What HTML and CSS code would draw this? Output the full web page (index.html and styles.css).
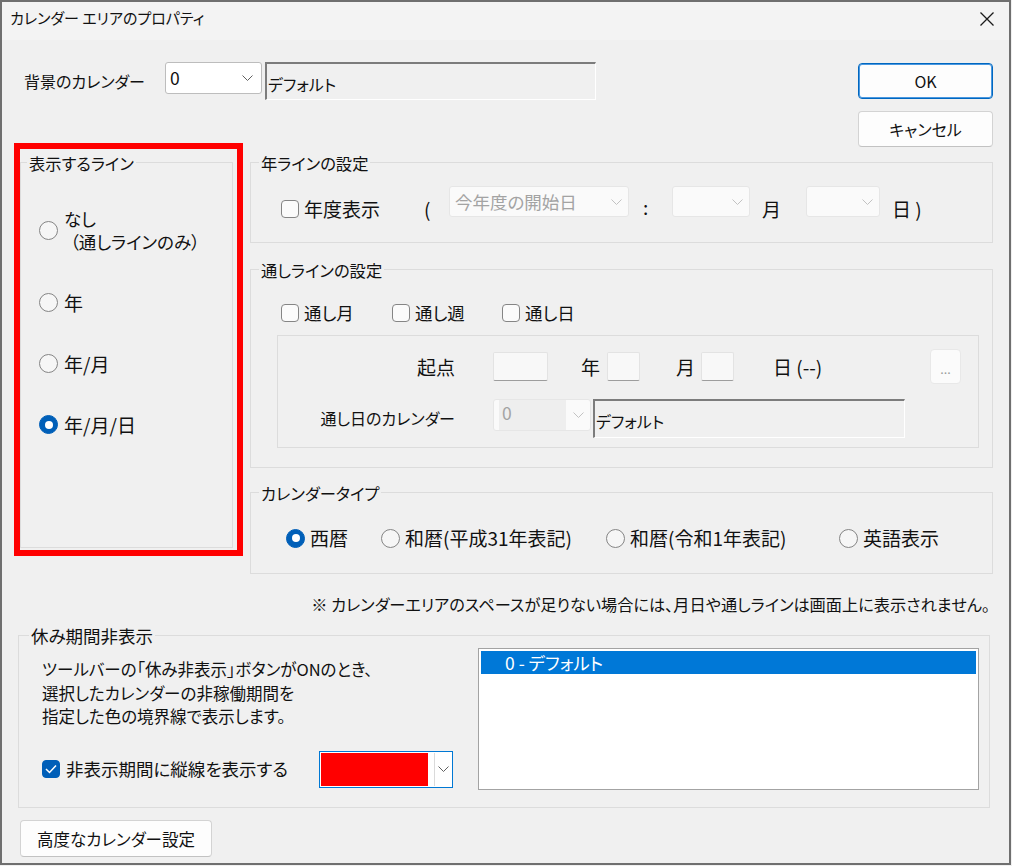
FILE: index.html
```html
<!DOCTYPE html>
<html lang="ja">
<head>
  <meta charset="UTF-8">
  <title>カレンダー エリアのプロパティ</title>
  <link rel="stylesheet" href="styles.css">
</head>
<body>
  <div class="window">
    <div class="titlebar">
      <span class="title">カレンダー エリアのプロパティ</span>
      <svg class="close" width="14" height="14" viewBox="0 0 14 14"><path d="M0.5 0.5 L13.5 13.5 M13.5 0.5 L0.5 13.5" stroke="#1a1a1a" stroke-width="1.3" fill="none"/></svg>
    </div>

    <div class="content">
      <div class="top-row">
        <span class="bg-label">背景のカレンダー</span>
        <div class="combo combo-bg">
          <span>0</span>
          <svg class="chev" width="11" height="6" viewBox="0 0 11 6"><path d="M0.5 0.5 L5.5 5.5 L10.5 0.5" stroke="#606060" fill="none"/></svg>
        </div>
        <div class="sunken field-bg">デフォルト</div>
        <div class="dlg-buttons">
          <button class="btn btn-default">OK</button>
          <button class="btn">キャンセル</button>
        </div>
      </div>

      <div class="middle">
        <!-- annotation box -->
        <div class="highlight">
          <div class="group group-lines">
            <span class="group-title">表示するライン</span>
            <div class="opt">
              <span class="radio"></span>
              <span class="opt-none">なし<br><span class="sub">（通しラインのみ）</span></span>
            </div>
            <div class="opt"><span class="radio"></span><span>年</span></div>
            <div class="opt"><span class="radio"></span><span>年/月</span></div>
            <div class="opt"><span class="radio on"></span><span>年/月/日</span></div>
          </div>
        </div>

        <div class="right-col">
          <div class="group group-year">
            <span class="group-title">年ラインの設定</span>
            <div class="year-row">
              <label class="chk year-chk"><span class="box"></span>年度表示</label>
              <span class="paren">(</span>
              <div class="combo dis combo-start">
                <span>今年度の開始日</span>
                <svg class="chev" width="11" height="6" viewBox="0 0 11 6"><path d="M0.5 0.5 L5.5 5.5 L10.5 0.5" stroke="#c2c2c2" fill="none"/></svg>
              </div>
              <span class="colon">:</span>
              <div class="combo dis combo-month">
                <svg class="chev" width="11" height="6" viewBox="0 0 11 6"><path d="M0.5 0.5 L5.5 5.5 L10.5 0.5" stroke="#c2c2c2" fill="none"/></svg>
              </div>
              <span class="unit">月</span>
              <div class="combo dis combo-day">
                <svg class="chev" width="11" height="6" viewBox="0 0 11 6"><path d="M0.5 0.5 L5.5 5.5 L10.5 0.5" stroke="#c2c2c2" fill="none"/></svg>
              </div>
              <span class="unit-end">日 )</span>
            </div>
          </div>

          <div class="group group-through">
            <span class="group-title">通しラインの設定</span>
            <div class="chk-row">
              <label class="chk chk-month"><span class="box"></span>通し月</label>
              <label class="chk chk-week"><span class="box"></span>通し週</label>
              <label class="chk"><span class="box"></span>通し日</label>
            </div>
            <div class="origin-box">
              <div class="origin-row">
                <span class="row-label">起点</span>
                <span class="edit edit-year"></span>
                <span class="u-year">年</span>
                <span class="edit edit-small"></span>
                <span class="u-month">月</span>
                <span class="edit edit-small"></span>
                <span class="u-day">日 (--)</span>
                <button class="btn-more">...</button>
              </div>
              <div class="calendar-row">
                <span class="row-label cal-label">通し日のカレンダー</span>
                <div class="combo dis combo-cal">
                  <span class="val">0</span>
                  <svg class="chev" width="11" height="6" viewBox="0 0 11 6"><path d="M0.5 0.5 L5.5 5.5 L10.5 0.5" stroke="#c2c2c2" fill="none"/></svg>
                </div>
                <div class="sunken field-cal">デフォルト</div>
              </div>
            </div>
          </div>

          <div class="group group-type">
            <span class="group-title">カレンダータイプ</span>
            <div class="type-row">
              <div class="opt t1"><span class="radio on"></span><span>西暦</span></div>
              <div class="opt t2"><span class="radio"></span><span>和暦(平成31年表記)</span></div>
              <div class="opt t3"><span class="radio"></span><span>和暦(令和1年表記)</span></div>
              <div class="opt"><span class="radio"></span><span>英語表示</span></div>
            </div>
          </div>

          <div class="note">※ カレンダーエリアのスペースが足りない場合には、月日や通しラインは画面上に表示されません。</div>
        </div>
      </div>

      <div class="group group-holiday">
        <span class="group-title">休み期間非表示</span>
        <div class="holiday-left">
          <p class="desc">ツールバーの「休み非表示」ボタンがONのとき、<br>選択したカレンダーの非稼働期間を<br>指定した色の境界線で表示します。</p>
          <div class="holiday-row">
            <label class="chk holiday-chk">
              <span class="box checked"><svg width="12" height="10" viewBox="0 0 12 10"><path d="M1 5 L4.5 8.5 L11 1.5" stroke="#fff" stroke-width="1.5" fill="none"/></svg></span>
              非表示期間に縦線を表示する
            </label>
            <div class="color-combo">
              <span class="swatch"></span>
              <span class="drop"><svg width="11" height="6" viewBox="0 0 11 6"><path d="M0.5 0.5 L5.5 5.5 L10.5 0.5" stroke="#606060" fill="none"/></svg></span>
            </div>
          </div>
        </div>
        <div class="cal-list">
          <div class="cal-item">0 - デフォルト</div>
        </div>
      </div>

      <button class="btn btn-advanced">高度なカレンダー設定</button>
    </div>
  </div>
</body>
</html>
```

FILE: styles.css
```css
* {
  box-sizing: border-box;
}
body {
  margin: 0;
  background: #f0f0f0;
  font-family: "Noto Sans CJK JP", "Noto Sans", sans-serif;
  font-size: 17.5px;
  font-feature-settings: "palt";
  color: #111;
}
.window {
  width: 1011px;
  height: 865px;
  border: 2px solid #6f6f6f;
  background: #f0f0f0;
  display: flex;
  flex-direction: column;
}
.titlebar {
  height: 38px;
  flex: none;
  background: #f3f3f3;
  display: flex;
  align-items: flex-start;
  justify-content: space-between;
  padding: 6px 15px 0 8px;
}
.title {
  font-size: 15px;
  line-height: 20px;
}
.close {
  margin-top: 4px;
}
.content {
  padding-top: 22px;
}

/* controls */
.combo {
  display: flex;
  align-items: center;
  background: #fff;
  border: 1px solid #bdbdbd;
  border-radius: 3px;
  padding: 0 8px 0 4px;
  line-height: 22px;
}
.combo .chev {
  margin-left: auto;
  flex: none;
}
.combo.dis {
  background: #fafafa;
  border-color: #e6e6e6;
  color: #a3a3a3;
  padding: 0 6px 0 5px;
}
.sunken {
  background: #f0f0f0;
  border-style: solid;
  border-width: 2px 1px 1px 2px;
  border-color: #7c7c7c #ffffff #ffffff #7c7c7c;
  line-height: 22px;
  padding-left: 1px;
  font-size: 16px;
}
.btn {
  font: inherit;
  font-size: 16px;
  color: #111;
  background: #fdfdfd;
  border: 1px solid #d3d3d3;
  border-bottom-color: #c2c2c2;
  border-radius: 4px;
  padding: 0;
}
.btn-default {
  border: 1px solid #0067c0;
  box-shadow: inset 0 0 0 1px #4a98e0;
}
.radio {
  flex: none;
  width: 19px;
  height: 19px;
  border: 1px solid #858585;
  border-radius: 50%;
  background: #f6f6f6;
  display: flex;
  align-items: center;
  justify-content: center;
}
.radio.on {
  background: #005fb8;
  border-color: #005fb8;
}
.radio.on::after {
  content: "";
  width: 8px;
  height: 8px;
  border-radius: 50%;
  background: #fff;
}
.chk {
  display: flex;
  align-items: center;
  gap: 5px;
  line-height: 22px;
  flex: none;
}
.box {
  flex: none;
  width: 18px;
  height: 18px;
  border: 1px solid #858585;
  border-radius: 4px;
  background: #fbfbfb;
  display: flex;
  align-items: center;
  justify-content: center;
}
.box.checked {
  background: #005fb8;
  border-color: #005fb8;
}
.opt {
  display: flex;
  align-items: center;
  gap: 6px;
  line-height: 23px;
  font-size: 19px;
}

/* groups */
.group {
  position: relative;
  border: 1px solid #dcdcdc;
}
.group-title {
  position: absolute;
  top: -11px;
  left: 8px;
  padding: 0 2px;
  line-height: 22px;
  font-size: 16.3px;
  background: #f0f0f0;
}

/* top row */
.top-row {
  display: flex;
  align-items: flex-start;
  height: 81px;
  padding-left: 22px;
}
.bg-label {
  width: 141px;
  line-height: 22px;
  margin-top: 8px;
  font-size: 16px;
}
.combo-bg {
  width: 97px;
  height: 32px;
}
.field-bg {
  margin-left: 3px;
  width: 331px;
  height: 38px;
  padding-top: 9px;
}
.dlg-buttons {
  margin-left: auto;
  margin-right: 16px;
  margin-top: 1px;
  width: 135px;
  display: flex;
  flex-direction: column;
  gap: 12px;
}
.dlg-buttons .btn {
  height: 36px;
}

/* middle */
.middle {
  display: flex;
  align-items: flex-start;
  padding-left: 12px;
}
.highlight {
  width: 229px;
  height: 413px;
  border: 6px solid #ff0000;
  padding-top: 13px;
}
.group-lines {
  width: 213px;
  height: 386px;
  padding: 44px 0 0 18px;
  display: flex;
  flex-direction: column;
  gap: 38px;
}
.group-lines .group-title {
  left: 6px;
}
.opt-none {
  font-size: 17.5px;
}
.sub {
  margin-left: 6px;
}
.right-col {
  margin-left: 7px;
  width: 743px;
}

.group-year {
  margin-top: 19px;
  height: 81px;
}
.year-row {
  display: flex;
  align-items: flex-start;
  padding: 23px 0 0 30px;
  font-size: 19px;
}
.year-chk {
  width: 143px;
  margin-top: 12px;
}
.paren {
  width: 25px;
  margin-top: 12px;
  line-height: 22px;
}
.combo-start {
  width: 180px;
  height: 31px;
  font-size: 17.5px;
}
.colon {
  width: 43px;
  padding-left: 14px;
  margin-top: 10px;
  line-height: 22px;
}
.combo-month {
  width: 78px;
  height: 31px;
}
.unit {
  width: 56px;
  padding-left: 12px;
  margin-top: 12px;
  line-height: 22px;
}
.combo-day {
  width: 74px;
  height: 31px;
}
.unit-end {
  padding-left: 12px;
  margin-top: 12px;
  line-height: 22px;
}

.group-through {
  margin-top: 26px;
  height: 199px;
}
.chk-row {
  display: flex;
  padding: 32px 0 0 30px;
}
.chk-month {
  width: 111px;
}
.chk-week {
  width: 110px;
}
.origin-box {
  margin: 11px 0 0 26px;
  width: 702px;
  height: 113px;
  border: 1px solid #dcdcdc;
}
.origin-row {
  display: flex;
  align-items: center;
  height: 35px;
  margin-top: 13px;
  line-height: 22px;
  font-size: 19px;
}
.row-label {
  width: 177px;
  text-align: right;
  flex: none;
}
.edit {
  flex: none;
  height: 29px;
  background: #f8f8f8;
  border: 1px solid #e3e3e3;
  border-bottom-color: #9d9d9d;
  border-radius: 2px;
}
.edit-year {
  margin-left: 38px;
  width: 55px;
}
.edit-small {
  width: 33px;
}
.u-year {
  width: 59px;
  padding-left: 33px;
}
.u-month {
  width: 61px;
  padding-left: 36px;
}
.u-day {
  padding-left: 39px;
}
.btn-more {
  margin-left: auto;
  margin-right: 17px;
  width: 31px;
  height: 35px;
  background: #fbfbfb;
  border: 1px solid #e8e8e8;
  border-radius: 4px;
  color: #9a9a9a;
  font-family: "Noto Sans", sans-serif;
  font-size: 13px;
  padding: 4px 0 0 0;
}
.calendar-row {
  display: flex;
  align-items: flex-start;
  margin-top: 15px;
  line-height: 22px;
}
.cal-label {
  margin-top: 8px;
  font-size: 16px;
}
.combo-cal {
  margin-left: 38px;
  width: 98px;
  height: 32px;
  padding: 2px 8px 2px 2px;
  align-items: stretch;
}
.combo-cal .val {
  width: 67px;
  background: #eeeeee;
  padding-left: 3px;
  line-height: 26px;
}
.combo-cal .chev {
  align-self: center;
}
.field-cal {
  margin-left: 2px;
  width: 312px;
  height: 39px;
  padding-top: 9px;
}

.group-type {
  margin-top: 24px;
  height: 82px;
}
.type-row {
  display: flex;
  padding: 34px 0 0 35px;
}
.type-row .opt {
  gap: 5px;
  line-height: 22px;
}
.t1 {
  width: 95px;
}
.t2 {
  width: 225px;
}
.t3 {
  width: 233px;
}
.note {
  margin-top: 19px;
  line-height: 22px;
  text-align: right;
  padding-right: 3px;
  font-size: 16.2px;
}

/* holiday */
.group-holiday {
  margin: 20px 0 0 16px;
  width: 972px;
  height: 173px;
  display: flex;
}
.group-holiday .group-title {
  left: 10px;
  font-size: 17.5px;
}
.holiday-left {
  padding: 22px 0 0 23px;
}
.desc {
  margin: 0;
  line-height: 23.5px;
  font-size: 16.5px;
}
.holiday-row {
  display: flex;
  align-items: center;
  margin-top: 22px;
}
.holiday-chk {
  width: 277px;
  gap: 6px;
}
.color-combo {
  display: flex;
  width: 134px;
  height: 37px;
  padding: 1px;
  border: 1px solid #0078d4;
  background: #fff;
}
.swatch {
  width: 107px;
  background: #ff0000;
}
.drop {
  margin-left: 6px;
  flex: 1;
  border-left: 1px solid #dadada;
  display: flex;
  align-items: center;
  justify-content: center;
}
.cal-list {
  margin: 12px 10px 0 auto;
  width: 501px;
  height: 142px;
  border: 1px solid #a3a3a3;
  background: #fff;
  padding: 2px;
}
.cal-item {
  background: #0078d7;
  color: #fff;
  line-height: 23px;
  padding-left: 24px;
}
.btn-advanced {
  margin: 12px 0 0 18px;
  width: 192px;
  height: 37px;
  font-size: 16.5px;
}
```
